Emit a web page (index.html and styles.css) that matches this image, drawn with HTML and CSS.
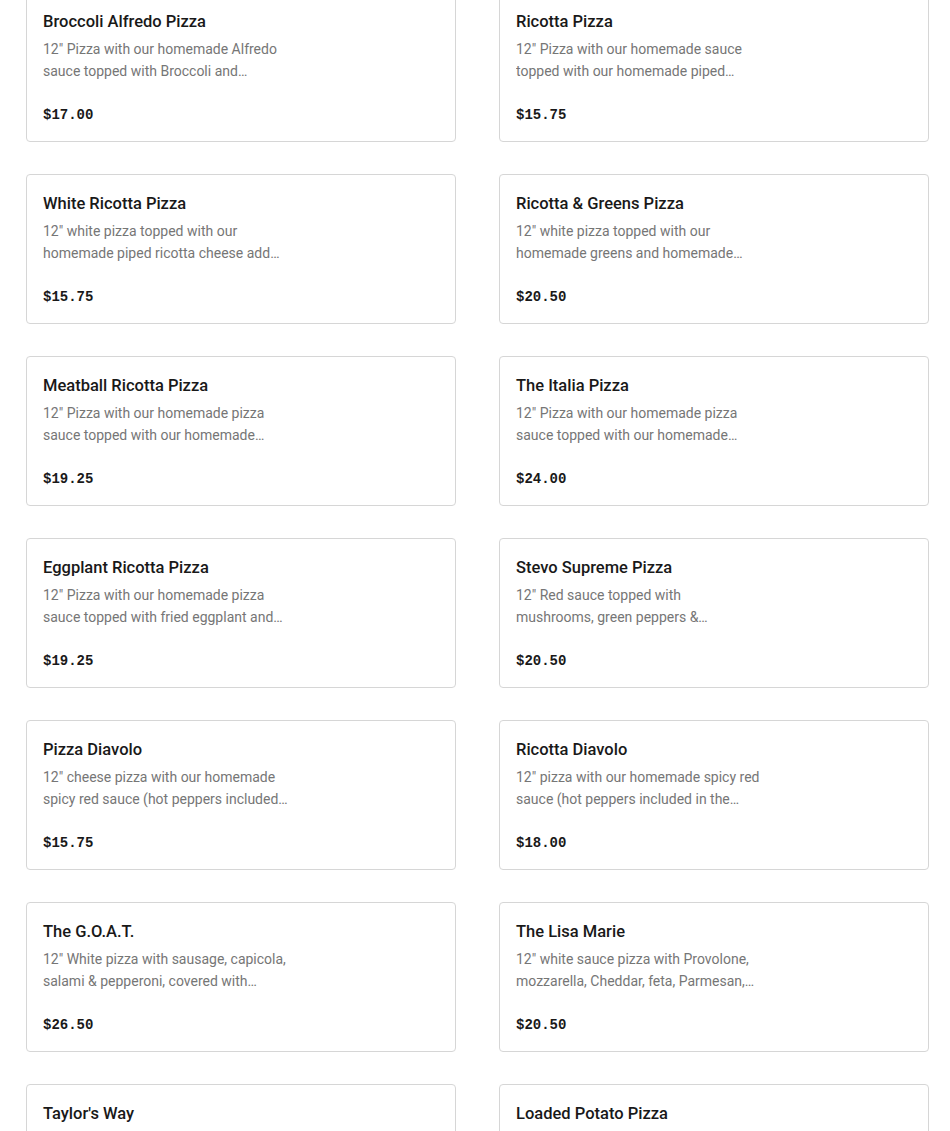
FILE: index.html
```html
<!DOCTYPE html>
<html lang="en">
<head>
<meta charset="utf-8">
<title>Menu</title>
<link rel="stylesheet" href="styles.css">
</head>
<body>
<main class="menu">
  <div class="grid">
    <article class="card"><h3 class="title">Broccoli Alfredo Pizza</h3><p class="desc">12" Pizza with our homemade Alfredo sauce topped with Broccoli and mozzarella cheese.</p><div class="price">$17.00</div></article>
    <article class="card"><h3 class="title">Ricotta Pizza</h3><p class="desc">12" Pizza with our homemade sauce topped with our homemade piped ricotta cheese.</p><div class="price">$15.75</div></article>
    <article class="card"><h3 class="title">White Ricotta Pizza</h3><p class="desc">12" white pizza topped with our homemade piped ricotta cheese add garlic and fresh basil.</p><div class="price">$15.75</div></article>
    <article class="card"><h3 class="title">Ricotta &amp; Greens Pizza</h3><p class="desc">12" white pizza topped with our homemade greens and homemade ricotta cheese.</p><div class="price">$20.50</div></article>
    <article class="card"><h3 class="title">Meatball Ricotta Pizza</h3><p class="desc">12" Pizza with our homemade pizza sauce topped with our homemade meatballs and ricotta.</p><div class="price">$19.25</div></article>
    <article class="card"><h3 class="title">The Italia Pizza</h3><p class="desc">12" Pizza with our homemade pizza sauce topped with our homemade sausage and peppers.</p><div class="price">$24.00</div></article>
    <article class="card"><h3 class="title">Eggplant Ricotta Pizza</h3><p class="desc">12" Pizza with our homemade pizza sauce topped with fried eggplant and ricotta cheese.</p><div class="price">$19.25</div></article>
    <article class="card"><h3 class="title">Stevo Supreme Pizza</h3><p class="desc">12" Red sauce topped with mushrooms, green peppers &amp; pepperoni, onions, sausage and black olives.</p><div class="price">$20.50</div></article>
    <article class="card"><h3 class="title">Pizza Diavolo</h3><p class="desc">12" cheese pizza with our homemade spicy red sauce (hot peppers included in the sauce).</p><div class="price">$15.75</div></article>
    <article class="card"><h3 class="title">Ricotta Diavolo</h3><p class="desc">12" pizza with our homemade spicy red sauce (hot peppers included in the sauce) with ricotta.</p><div class="price">$18.00</div></article>
    <article class="card"><h3 class="title">The G.O.A.T.</h3><p class="desc">12" White pizza with sausage, capicola, salami &amp; pepperoni, covered with mozzarella.</p><div class="price">$26.50</div></article>
    <article class="card"><h3 class="title">The Lisa Marie</h3><p class="desc">12" white sauce pizza with Provolone, mozzarella, Cheddar, feta, Parmesan, and ricotta.</p><div class="price">$20.50</div></article>
    <article class="card"><h3 class="title">Taylor's Way</h3><p class="desc">12" white pizza with garlic, spinach, tomatoes and fresh mozzarella cheese.</p><div class="price">$21.00</div></article>
    <article class="card"><h3 class="title">Loaded Potato Pizza</h3><p class="desc">12" white pizza with potatoes, bacon, cheddar and scallions.</p><div class="price">$21.00</div></article>
  </div>
</main>
</body>
</html>
```

FILE: styles.css
```css
html, body {
  margin: 0;
  padding: 0;
  background: #ffffff;
}
body {
  font-family: Roboto, "Liberation Sans", Arial, sans-serif;
  color: #191919;
}
.menu {
  padding: 0 22px 40px 26px;
  margin-top: -8px;
}
.grid {
  display: grid;
  grid-template-columns: 430px 430px;
  column-gap: 43px;
  row-gap: 32px;
}
.card {
  box-sizing: border-box;
  border: 1px solid #d6d6d6;
  border-radius: 4px;
  padding: 17px 16px 14px 16px;
  display: flex;
  flex-direction: column;
}
.title {
  margin: 0;
  font-size: 16.5px;
  line-height: 24px;
  font-weight: 500;
  color: #191919;
}
.desc {
  margin: 4px 0 0 0;
  max-width: 245px;
  font-size: 14px;
  line-height: 22px;
  color: #767676;
  display: -webkit-box;
  -webkit-line-clamp: 2;
  -webkit-box-orient: vertical;
  overflow: hidden;
}
.price {
  margin-top: 21px;
  font-family: "Liberation Mono", "DejaVu Sans Mono", monospace;
  font-weight: 700;
  font-size: 14px;
  line-height: 24px;
  color: #191919;
}
```
